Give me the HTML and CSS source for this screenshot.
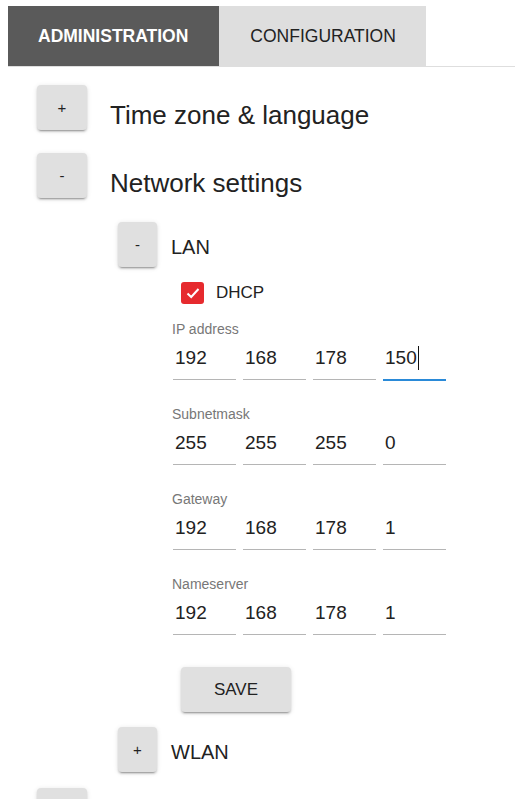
FILE: index.html
```html
<!DOCTYPE html>
<html lang="en">
<head>
<meta charset="utf-8">
<title>Settings</title>
<link rel="stylesheet" href="styles.css">
</head>
<body>
<nav class="tabs">
  <div class="tab tab-active">ADMINISTRATION</div>
  <div class="tab">CONFIGURATION</div>
</nav>

<div class="tree">
  <section class="item item-top">
    <div class="row">
      <button class="toggle toggle-lg">+</button>
      <span class="title title-lg">Time zone &amp; language</span>
    </div>
  </section>

  <section class="item item-top item-open">
    <div class="row">
      <button class="toggle toggle-lg">-</button>
      <span class="title title-lg">Network settings</span>
    </div>
    <div class="children">
      <section class="item">
        <div class="row">
          <button class="toggle toggle-sm">-</button>
          <span class="title title-sm">LAN</span>
        </div>
        <div class="lan">
          <label class="check">
            <span class="box">
              <svg width="16" height="16" viewBox="0 0 16 16"><polyline points="2.5,8.5 6.2,12 13.5,4" fill="none" stroke="#fff" stroke-width="2"/></svg>
            </span>
            <span class="check-text">DHCP</span>
          </label>

          <div class="group">
            <div class="label">IP address</div>
            <div class="fields">
              <div class="field">192</div>
              <div class="field">168</div>
              <div class="field">178</div>
              <div class="field field-focus">150<span class="caret"></span></div>
            </div>
          </div>
          <div class="group">
            <div class="label">Subnetmask</div>
            <div class="fields">
              <div class="field">255</div>
              <div class="field">255</div>
              <div class="field">255</div>
              <div class="field">0</div>
            </div>
          </div>
          <div class="group">
            <div class="label">Gateway</div>
            <div class="fields">
              <div class="field">192</div>
              <div class="field">168</div>
              <div class="field">178</div>
              <div class="field">1</div>
            </div>
          </div>
          <div class="group">
            <div class="label">Nameserver</div>
            <div class="fields">
              <div class="field">192</div>
              <div class="field">168</div>
              <div class="field">178</div>
              <div class="field">1</div>
            </div>
          </div>

          <button class="save">SAVE</button>
        </div>
      </section>

      <section class="item item-wlan">
        <div class="row">
          <button class="toggle toggle-sm">+</button>
          <span class="title title-sm">WLAN</span>
        </div>
      </section>
    </div>
  </section>

  <section class="item item-top item-last">
    <div class="row">
      <button class="toggle toggle-lg" aria-label="expand"></button>
    </div>
  </section>
</div>
</body>
</html>
```

FILE: styles.css
```css
html, body {
  margin: 0;
  padding: 0;
  background: #fff;
}
body {
  padding: 6px 0 0 8px;
  font-family: "Liberation Sans", Arial, sans-serif;
  color: #222;
  overflow: hidden;
}

.tabs {
  display: flex;
  border-bottom: 1px solid #dedede;
}
.tab {
  height: 60px;
  display: flex;
  align-items: center;
  padding: 0 30px 0 31px;
  background: #dedede;
  font-size: 17.5px;
  color: #222;
}
.tab-active {
  background: #5a5a5a;
  color: #fff;
  font-weight: bold;
  padding: 0 31px 0 30px;
}

.tree {
  padding: 18px 0 0 29px;
}

.row {
  display: flex;
  align-items: flex-start;
}

.toggle {
  border: none;
  background: #e0e0e0;
  border-radius: 4px;
  height: 45px;
  padding: 0;
  font-family: "Liberation Sans", Arial, sans-serif;
  font-size: 15px;
  color: #222;
  box-shadow: 0 3px 1px -2px rgba(0,0,0,.2), 0 2px 2px 0 rgba(0,0,0,.14), 0 1px 5px 0 rgba(0,0,0,.12);
  flex: none;
}
.toggle-lg {
  width: 50px;
  margin-right: 23px;
}
.toggle-sm {
  width: 39px;
  margin-right: 14px;
}

.title-lg {
  font-size: 26px;
  line-height: 30px;
  margin-top: 15px;
}
.title-sm {
  font-size: 20px;
  line-height: 24px;
  margin-top: 13px;
}

.item-top {
  margin-bottom: 23px;
}
.item-open {
  margin-bottom: 16px;
}

.children {
  padding-left: 81px;
  margin-top: 24px;
}

.lan {
  margin-top: 15px;
  padding-left: 54px;
  display: flex;
  flex-direction: column;
  align-items: flex-start;
}

.check {
  display: flex;
  align-items: center;
  height: 22px;
  margin-left: 9px;
  margin-bottom: 17px;
}
.box {
  width: 23px;
  height: 22px;
  border-radius: 3px;
  background: #e62a2e;
  display: flex;
  align-items: center;
  justify-content: center;
}
.check-text {
  font-size: 17px;
  margin-left: 12px;
}

.group {
  margin-bottom: 26px;
}
.group:last-of-type {
  margin-bottom: 0;
}
.label {
  font-size: 14px;
  line-height: 16px;
  color: #777;
  margin-bottom: 7px;
}
.fields {
  display: flex;
  gap: 7px;
  height: 36px;
  align-items: flex-start;
  padding-left: 1px;
}
.field {
  width: 61px;
  padding: 2px 0 9px 2px;
  font-size: 19px;
  line-height: 24px;
  color: #222;
  border-bottom: 1px solid #b5b5b5;
  display: flex;
  align-items: center;
}
.field-focus {
  border-bottom: 2px solid #2a8ad8;
}
.caret {
  display: inline-block;
  width: 1px;
  height: 24px;
  background: #111;
  margin-left: 1px;
}

.save {
  margin: 32px 0 0 9px;
  width: 110px;
  height: 45px;
  border: none;
  border-radius: 4px;
  background: #e0e0e0;
  font-family: "Liberation Sans", Arial, sans-serif;
  font-size: 17px;
  color: #222;
  box-shadow: 0 3px 1px -2px rgba(0,0,0,.2), 0 2px 2px 0 rgba(0,0,0,.14), 0 1px 5px 0 rgba(0,0,0,.12);
}

.item-wlan {
  margin-top: 15px;
}
```
